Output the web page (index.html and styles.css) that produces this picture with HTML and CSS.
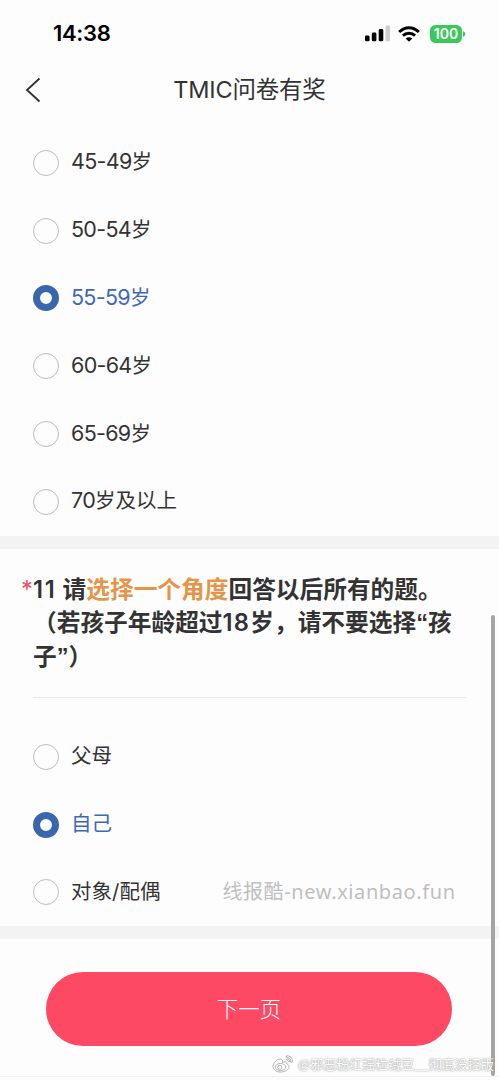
FILE: index.html
```html
<!DOCTYPE html>
<html lang="zh-CN">
<head>
<meta charset="utf-8">
<meta name="viewport" content="width=device-width, initial-scale=1">
<title>TMIC问卷有奖</title>
<link rel="stylesheet" href="styles.css">
</head>
<body>
<div class="screen">
  <header class="status">
    <span class="time">14:38</span>
    <div class="indicators">
      <svg class="signal" width="26" height="17" viewBox="0 0 26 17"><rect x="0" y="10.5" width="4.6" height="5.8" rx="1.4"/><rect x="6.8" y="7.5" width="4.6" height="8.8" rx="1.4"/><rect x="13.7" y="4" width="4.6" height="12.3" rx="1.4"/><rect x="20.5" y="0.5" width="4.6" height="15.8" rx="1.4" fill="#cfcfcf"/></svg>
      <svg class="wifi" width="22" height="16" viewBox="0 0 22 16"><g fill="none" stroke="#000" stroke-width="3"><path d="M1.2 6C6.8.3 15.2.3 20.8 6"/><path d="M4.9 9.7c3.5-3.3 8.700-3.300 12.200 0"/></g><path d="M7.600 12.400c2-1.700 4.800-1.700 6.800 0L11 15.800z"/></svg>
      <span class="battery">100</span>
      <svg class="battery-tip" width="3" height="6" viewBox="0 0 3 6"><path d="M0 0q2.400 1 2.400 3T0 6z" fill="#3bc95b"/></svg>
    </div>
  </header>
  <nav class="nav">
    <svg class="back" width="16" height="26" viewBox="0 0 16 26"><path d="M14.500 1.500 2 13l12.500 11.500" fill="none" stroke="#333" stroke-width="1.900"/></svg>
    <h1 class="nav-title">TMIC问卷有奖</h1>
  </nav>
  <ul class="options ages">
    <li class="option"><i class="radio"></i><span class="label"><span class="num">45-49</span>岁</span></li>
    <li class="option"><i class="radio"></i><span class="label"><span class="num">50-54</span>岁</span></li>
    <li class="option selected"><i class="radio"></i><span class="label"><span class="num">55-59</span>岁</span></li>
    <li class="option"><i class="radio"></i><span class="label"><span class="num">60-64</span>岁</span></li>
    <li class="option"><i class="radio"></i><span class="label"><span class="num">65-69</span>岁</span></li>
    <li class="option"><i class="radio"></i><span class="label"><span class="num">70</span>岁及以上</span></li>
  </ul>
  <div class="band"></div>
  <section class="question">
    <h2 class="question-title"><span class="required">*</span><span><span class="index">11</span> 请<em class="accent">选择一个角度</em>回答以后所有的题。<br>（若孩子年龄超过<span class="limit">18</span>岁，请不要选择<span class="quote">“</span>孩<br>子<span class="quote">”</span>）</span></h2>
    <ul class="options roles">
      <li class="option"><i class="radio"></i><span class="label">父母</span></li>
      <li class="option selected"><i class="radio"></i><span class="label">自己</span></li>
      <li class="option"><i class="radio"></i><span class="label">对象/配偶</span><span class="site">线报酷-new.xianbao.fun</span></li>
    </ul>
  </section>
  <div class="band"></div>
  <footer class="footer"><button class="next" type="button">下一页</button></footer>
  <div class="scrollbar"></div>
  <div class="credit">
    <svg width="22" height="18" viewBox="0 0 22 18"><g fill="#fff" stroke="#aaa" stroke-width=".9"><path d="M8 4C5 4 1 8 1 11.500 1 15 4.500 17 8.500 17c5 0 8.500-2.700 8.500-5.500 0-1.600-1.200-2.300-2.300-2.600.7-2-.8-2.800-4.200-1.400C11 5.500 10 4 8 4z"/><ellipse cx="8.500" cy="12" rx="5.300" ry="3.500"/><circle cx="7.800" cy="12.400" r="2"/><path d="M14 1c4-.8 7.500 2.500 6 6.500l-1.500-.5c.8-2.800-1.500-5-4.200-4.500zM14.500 4c2-.4 3.500 1 3 2.700l-1.300-.4c.2-.8-.5-1.300-1.400-1.100z"/></g></svg>
    <span class="credit-name">@邪恶粉红摇粒绒豆__彻底没招版</span>
  </div>
</div>
</body>
</html>
```
FILE: styles.css
```css
* { box-sizing: border-box; }
body { margin: 0; background: #fdfdfd; color: #333; font-family: Inter, "Noto Sans CJK SC", sans-serif; }
.screen { position: relative; width: 499px; height: 1080px; overflow: hidden; }
.status { height: 66px; padding: 0 33px 0 53px; display: flex; align-items: center; justify-content: space-between; }
.time { font-size: 22px; font-weight: 600; color: #000; letter-spacing: -0.3px; }
.indicators { display: flex; align-items: center; padding-top: 1px; }
.signal { margin: 0 -2px 1px 0; }
.wifi { margin-left: 9px; }
.battery { margin-left: 10px; width: 32px; height: 18px; border-radius: 5.500px; background: #3bc95b; color: #fff; font-size: 14px; font-weight: 600; line-height: 18px; text-align: center; }
.battery-tip { margin-left: 1px; }
.nav { height: 63px; display: grid; grid-template-columns: 60px 1fr 60px; align-items: center; padding-bottom: 16px; }
.back { margin-left: 25px; }
.nav-title { margin: 0; font-size: 23.500px; line-height: 30px; font-weight: 400; letter-spacing: -.2px; text-align: center; white-space: nowrap; }
.options { list-style: none; margin: 0; padding: 0 33px; }
.option { height: 67.800px; display: flex; align-items: center; }
.ages { height: 407px; }
.radio { flex: none; width: 26px; height: 26px; border: 1px solid #bdbdbd; border-radius: 50%; }
.label { margin: -1px 0 0 12px; font-size: 20.500px; line-height: 30px; white-space: nowrap; }
.num { font-size: 21.500px; letter-spacing: -.7px; line-height: 1; }
.selected .radio { border: 7px solid #3966ac; }
.selected .label { color: #3f68b4; }
.band { height: 13px; background: #f3f3f3; }
.question { height: 377px; padding-top: 24px; }
.question-title { position: relative; display: flex; margin: 0 33px; height: 125px; border-bottom: 1px solid #e7e7e7; font-size: 23.700px; font-weight: 600; line-height: 33.300px; white-space: nowrap; }
.required { position: absolute; left: -12px; color: #f04a68; font-weight: 400; }
.index { letter-spacing: 1.800px; }
.limit { letter-spacing: 1.300px; }
.quote { font-family: "Liberation Sans", sans-serif; line-height: 1; }
.accent { color: #e3964a; font-style: normal; }
.roles { padding-top: 25px; }
.site { margin: -3px 0 0 62px; color: #bfbfbf; font: 20px "Noto Sans", "Noto Sans CJK SC", sans-serif; letter-spacing: .6px; white-space: nowrap; }
.footer { padding: 33px 47px 0 46px; height: 138px; border-bottom: 1px solid #f0f0f0; }
.next { display: block; width: 100%; height: 74px; padding: 0 0 3px; border: 0; border-radius: 37px; background: #fe4965; color: #fff; font: 300 21.500px "Noto Sans CJK SC", sans-serif; }
.scrollbar { position: absolute; top: 615px; left: 491px; width: 4px; height: 461px; border-radius: 2px; background: #a4a4a4; }
.credit { position: absolute; left: 272px; top: 1054px; display: flex; align-items: center; gap: 4px; height: 20px; white-space: nowrap; }
.credit-name { font: 13px/20px "Noto Sans CJK SC", sans-serif; color: #fff; text-shadow: 0 0 1px #999, 0 0 2px #aaa; }
```
